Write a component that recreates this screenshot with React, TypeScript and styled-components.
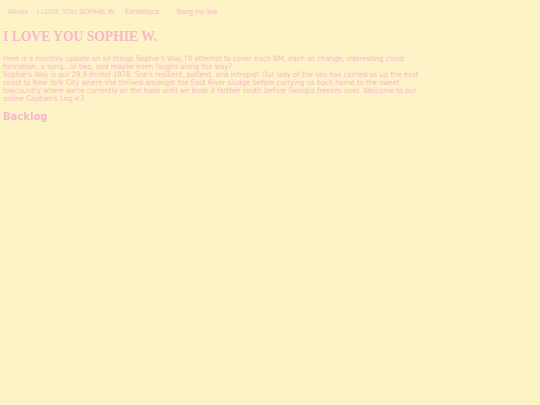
import React from "react";
import styled, { createGlobalStyle } from "styled-components";

const GlobalStyle = createGlobalStyle`
  html, body {
    margin: 0;
    padding: 0;
    background-color: #fef3c7;
  }
  body {
    min-height: 405px;
  }
`;

const Page = styled.div`
  min-height: 405px;
  background-color: #fef3c7;
  color: #f8b9cb;
  padding: 0 3px;
`;

const Nav = styled.nav`
  display: flex;
  align-items: center;
  height: 24px;
  padding-left: 5px;
  font-family: "Liberation Sans", Arial, sans-serif;
  font-size: 7.1px;
`;

const NavLink = styled.a<{ $gap?: number }>`
  color: inherit;
  text-decoration: none;
  margin-right: ${({ $gap }) => $gap ?? 9}px;
`;

const Title = styled.h1`
  margin: 4px 0 0;
  font-family: "Liberation Serif", "Times New Roman", serif;
  font-weight: bold;
  font-size: 13.6px;
  line-height: 18px;
`;

const Intro = styled.div`
  margin-top: 9px;
  width: 420px;
  font-family: "DejaVu Sans Condensed", "DejaVu Sans", sans-serif;
  font-stretch: condensed;
  font-size: 7.6px;
  line-height: 8px;
`;

const Para = styled.p`
  margin: 0;
`;

const Section = styled.h2`
  margin: 7px 0 0;
  font-family: "DejaVu Sans", Verdana, sans-serif;
  font-weight: bold;
  font-size: 10px;
  line-height: 14px;
`;

export default function App() {
  return (
    <>
      <GlobalStyle />
      <Page>
        <Nav>
          <NavLink href="#">Works</NavLink>
          <NavLink href="#">I LOVE YOU SOPHIE W.</NavLink>
          <NavLink href="#" $gap={17}>Exhibitions</NavLink>
          <NavLink href="#">Bang my line</NavLink>
        </Nav>
        <Title>I LOVE YOU SOPHIE W.</Title>
        <Intro>
          <Para>
            Here is a monthly update on all things Sophie's Way. I'll attempt to cover each NM, each oil change, interesting cloud formation, a song...or two, and maybe even laughs along the way?
          </Para>
          <Para>
            Sophie's Way is our 29.9 Bristol 1978. She's resilient, patient, and intrepid! Our lady of the sea has carried us up the east coast to New York City where she thrived amongst the East River sludge before carrying us back home to the sweet lowcountry where we're currently on the hook until we book it farther south before Georgia freezes over. Welcome to our online Captian's Log &lt;3
          </Para>
        </Intro>
        <Section>Backlog</Section>
      </Page>
    </>
  );
}
